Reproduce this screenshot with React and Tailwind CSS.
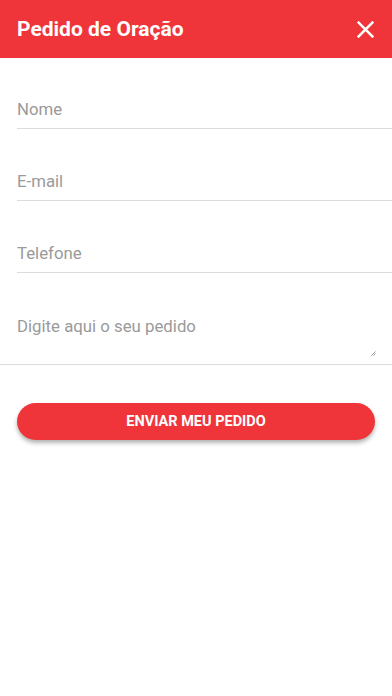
export default function App() {
  return (
    <div className="min-h-[696px] bg-white font-['Roboto',sans-serif]">
      <header className="h-[58px] bg-[#ef3539] flex items-center justify-between pl-[17px] pr-[15px]">
        <h1 className="text-white text-[21px] font-bold leading-none">Pedido de Oração</h1>
        <button className="w-[24px] h-[24px] flex items-center justify-center">
          <svg width="17" height="17" viewBox="0 0 16 16" fill="none" stroke="white" strokeWidth="2.4" strokeLinecap="square">
            <path d="M1.5 1.5l13 13M14.5 1.5l-13 13" />
          </svg>
        </button>
      </header>

      <div className="pt-[34px]">
        <div className="pl-[17px]">
          <div className="h-[37px] border-b border-[#dcdcdc] flex items-center">
            <span className="text-[16.8px] text-[#9a9a9a]">Nome</span>
          </div>
          <div className="h-[35px]" />
          <div className="h-[37px] border-b border-[#dcdcdc] flex items-center">
            <span className="text-[16.8px] text-[#9a9a9a]">E-mail</span>
          </div>
          <div className="h-[35px]" />
          <div className="h-[37px] border-b border-[#dcdcdc] flex items-center">
            <span className="text-[16.8px] text-[#9a9a9a]">Telefone</span>
          </div>
        </div>
        <div className="h-[35px]" />
        <div className="relative h-[57px] border-b border-[#dcdcdc] pl-[17px] pt-[6px]">
          <span className="text-[16.8px] text-[#9a9a9a]">Digite aqui o seu pedido</span>
          <svg className="absolute right-[16px] bottom-[8px]" width="5" height="5" viewBox="0 0 5 5">
            <path d="M4.5 0.5L0.5 4.5M4.5 2.5L2.5 4.5" stroke="#9a9a9a" strokeWidth="1" />
          </svg>
        </div>

        <div className="px-[17px] pt-[38px]">
          <button className="w-full h-[37px] rounded-full bg-[#ef3539] text-white text-[14.5px] font-bold shadow-[0_3px_4px_rgba(0,0,0,0.3)]">
            ENVIAR MEU PEDIDO
          </button>
        </div>
      </div>
    </div>
  );
}
